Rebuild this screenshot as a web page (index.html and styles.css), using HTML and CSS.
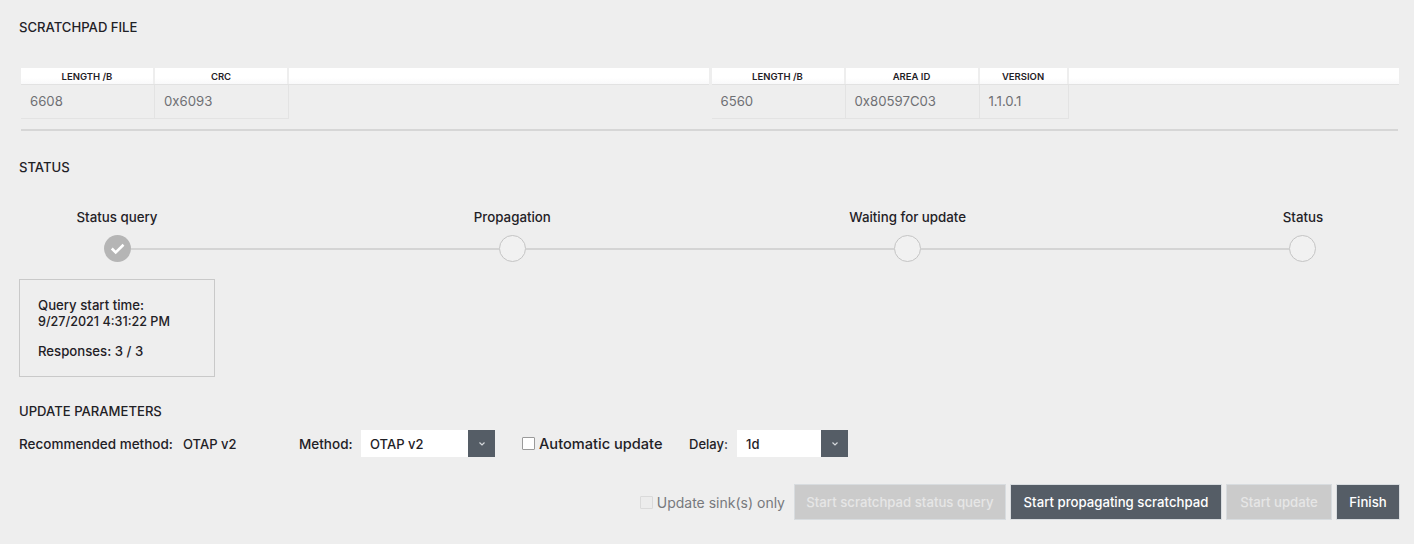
FILE: index.html
```html
<!DOCTYPE html>
<html lang="en">
<head>
<meta charset="utf-8">
<title>Scratchpad</title>
<link rel="stylesheet" href="styles.css">
</head>
<body>
<main class="page">
  <h2 class="title first">SCRATCHPAD FILE</h2>
  <div class="tables">
    <div class="table">
      <div class="thead">
        <div class="th">LENGTH /B</div>
        <div class="th">CRC</div>
        <div class="th fill"></div>
      </div>
      <div class="tbody">
        <div class="td">6608</div>
        <div class="td">0x6093</div>
      </div>
    </div>
    <div class="table">
      <div class="thead">
        <div class="th">LENGTH /B</div>
        <div class="th">AREA ID</div>
        <div class="th narrow">VERSION</div>
        <div class="th fill"></div>
      </div>
      <div class="tbody">
        <div class="td">6560</div>
        <div class="td">0x80597C03</div>
        <div class="td narrow">1.1.0.1</div>
      </div>
    </div>
  </div>
  <div class="divider"></div>

  <h2 class="title status-title">STATUS</h2>
  <div class="step-labels">
    <div class="step-label">Status query</div>
    <div class="step-label">Propagation</div>
    <div class="step-label">Waiting for update</div>
    <div class="step-label">Status</div>
  </div>
  <div class="step-track">
    <div class="dot done">
      <svg viewBox="0 0 27 27" width="27" height="27"><path d="M7.800 13.500l3.900 3.900 7.800-7.600" fill="none" stroke="#fff" stroke-width="2.600"/></svg>
    </div>
    <div class="link"></div>
    <div class="dot"></div>
    <div class="link"></div>
    <div class="dot"></div>
    <div class="link"></div>
    <div class="dot"></div>
  </div>
  <div class="info">
    <div>Query start time:</div>
    <div class="date">9/27/2021 4:31:22 PM</div>
    <div class="gap">Responses: 3 / 3</div>
  </div>

  <h2 class="title params-title">UPDATE PARAMETERS</h2>
  <div class="params">
    <span class="lbl rec-lbl">Recommended method:</span>
    <span class="val rec">OTAP v2</span>
    <span class="lbl method">Method:</span>
    <div class="select wide">
      <span class="sel-text">OTAP v2</span>
      <span class="sel-btn"><svg viewBox="0 0 8 6" width="8" height="6"><path d="M1.500 1.500L4 4l2.500-2.500" fill="none" stroke="#d5d8dc" stroke-width="1.200"/></svg></span>
    </div>
    <span class="box"></span>
    <span class="auto">Automatic update</span>
    <span class="lbl delay">Delay:</span>
    <div class="select slim">
      <span class="sel-text">1d</span>
      <span class="sel-btn"><svg viewBox="0 0 8 6" width="8" height="6"><path d="M1.500 1.500L4 4l2.500-2.500" fill="none" stroke="#d5d8dc" stroke-width="1.200"/></svg></span>
    </div>
  </div>

  <div class="actions">
    <span class="box disabled"></span>
    <span class="sink">Update sink(s) only</span>
    <button class="btn off b1">Start scratchpad status query</button>
    <button class="btn on b2">Start propagating scratchpad</button>
    <button class="btn off b3">Start update</button>
    <button class="btn on b4">Finish</button>
  </div>
</main>
</body>
</html>
```
FILE: styles.css
```css
* { box-sizing: border-box; }
html, body { margin: 0; padding: 0; }
body {
  width: 1414px;
  height: 544px;
  overflow: hidden;
  background: #eeeeee;
  color: #1f2126;
  font-family: Inter, "Noto Sans", sans-serif;
}
.page { padding: 0 14px 0 19px; }
.title {
  margin: 0;
  font-size: 13.100px;
  font-weight: 500;
  line-height: 16px;
}
.first { padding-top: 19px; }
.tables {
  display: flex;
  gap: 3px;
  margin: 33px 1px 0 2px;
}
.table { flex: 1; }
.thead { display: flex; height: 17px; background: linear-gradient(#fff 60%, #f9f9fa); border-bottom: 1px solid #e2e2e2; }
.th {
  width: 134px;
  padding-top: 1px;
  font-size: 9.500px;
  font-weight: 600;
  line-height: 15px;
  text-align: center;
  border-right: 2px solid #eeeeee;
}
.th.narrow, .td.narrow { width: 89px; }
.th.fill { flex: 1; border-right: 0; }
.tbody { display: flex; }
.td {
  width: 134px;
  height: 34px;
  padding-left: 9px;
  font-size: 13.200px;
  line-height: 33px;
  color: #6f7074;
  border-right: 1px solid #e3e3e3;
  border-bottom: 1px solid #e3e3e3;
}
.divider { height: 2px; margin: 10px 2px 0 2px; background: #d6d6d6; }
.status-title { margin-top: 28px; }
.step-labels { display: flex; justify-content: space-between; margin: 34px 0 0 18px; padding-right: 17px; }
.step-label { width: 160px; text-align: center; font-size: 13.300px; font-weight: 500; line-height: 16px; }
.step-track { display: flex; align-items: center; margin: 10px 84px 0 85px; }
.dot { width: 27px; height: 27px; flex: none; border-radius: 50%; border: 1px solid #c4c4c4; background: #f1f1f1; }
.dot.done { border: 0; background: #b5b5b5; }
.dot svg { display: block; }
.link { flex: 1; height: 2px; background: #d4d4d4; }
.info {
  width: 196px;
  height: 98px;
  margin-top: 17px;
  padding: 18px 18px;
  border: 1px solid #c9c9c9;
  font-size: 13.200px;
  font-weight: 500;
  line-height: 15.500px;
}
.date { font-size: 12.600px; }
.gap { margin-top: 15px; }
.params-title { margin-top: 26px; }
.params { display: flex; align-items: center; height: 27px; margin-top: 11px; font-size: 13px; font-weight: 500; }
.rec-lbl { width: 154px; font-size: 13.500px; white-space: nowrap; }
.rec { margin-left: 10px; width: 116px; }
.method { width: 53px; font-size: 13.500px; }
.select { display: flex; height: 27px; margin-left: 9px; background: #fff; }
.select.wide { width: 134px; }
.select.slim { width: 111px; margin-left: 10px; }
.sel-text { flex: 1; padding-left: 9px; line-height: 28px; }
.sel-btn { width: 27px; background: #555d66; display: flex; align-items: center; justify-content: center; }
.box { width: 13px; height: 13px; border: 1px solid #9a9a9a; background: #fff; margin-left: 27px; border-radius: 1px; }
.auto { margin-left: 4px; width: 123px; font-size: 14.600px; white-space: nowrap; }
.delay { margin-left: 27px; width: 38px; }
.actions { display: flex; align-items: center; justify-content: flex-end; margin-top: 27px; }
.box.disabled { background: #ececec; border-color: #dadada; margin: 0; }
.sink { margin-left: 4px; margin-right: 9px; font-size: 14px; color: #77797d; }
.btn {
  height: 36px;
  margin-left: 4px;
  border: 1px solid #d8dcdf;
  padding: 0;
  font-family: Inter, "Noto Sans", sans-serif;
  font-size: 13.200px;
  font-weight: 500;
}
.btn.on { background: #555d66; color: #fff; }
.btn.off { background: #cbcbcb; color: #e6e6e6; }
.b1 { width: 212px; margin-left: 0; }
.b2 { width: 212px; }
.b3 { width: 106px; }
.b4 { width: 64px; }
```
